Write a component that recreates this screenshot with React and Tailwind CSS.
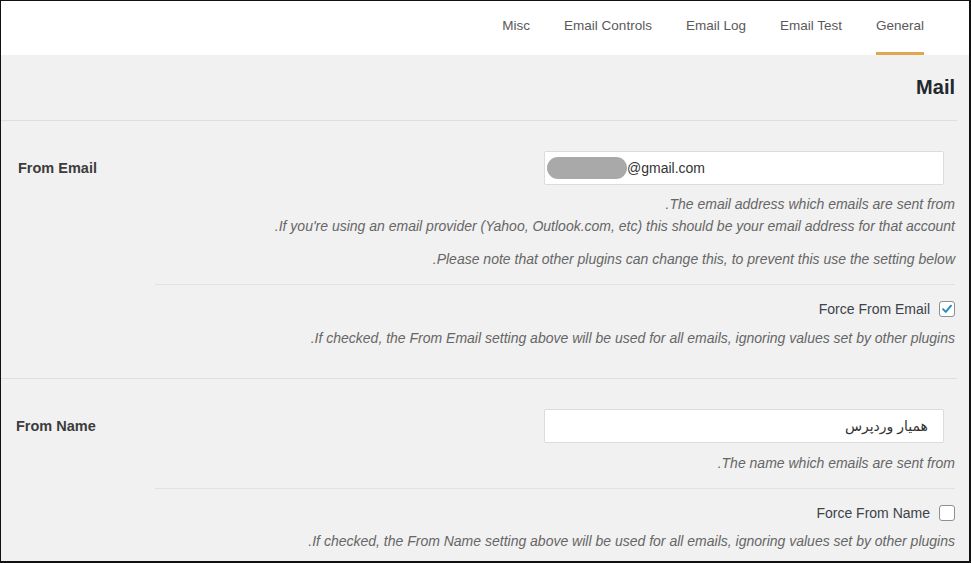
const TABS = ['Misc', 'Email Controls', 'Email Log', 'Email Test', 'General']

const font = { fontFamily: '"Liberation Sans", "DejaVu Sans", sans-serif' }

function Desc({ children, className = '' }) {
  return (
    <div dir="rtl" className={'text-right text-[14px] leading-[22px] italic text-[#666] ' + className}>
      {children}
    </div>
  )
}

function Check({ checked }) {
  return (
    <span className="flex h-4 w-4 items-center justify-center rounded-[3px] border border-[#8c8f94] bg-white">
      {checked && (
        <svg viewBox="0 0 16 16" className="h-[14px] w-[14px]">
          <path d="M3.5 8.2 6.6 11.3 12.6 4.2" fill="none" stroke="#1e8cbe" strokeWidth="2.2" strokeLinecap="round" strokeLinejoin="round" />
        </svg>
      )}
    </span>
  )
}

function Toggle({ label, checked }) {
  return (
    <div className="mt-[13px] flex h-[22px] items-center justify-end gap-[9px] text-[14px] text-[#3c434a]">
      <span>{label}</span>
      <Check checked={checked} />
    </div>
  )
}

export default function App() {
  return (
    <div style={font} className="h-[563px] w-[971px] overflow-hidden border-t border-l border-r-2 border-b-2 border-[#111] bg-[#f1f1f1]">
      {/* Tabs */}
      <div className="flex h-[54px] justify-end gap-[34px] bg-white pr-[45px] text-[13.5px] text-[#5a5a5a]">
        {TABS.map((t) => (
          <div
            key={t}
            className={'h-[54px] pt-[15px] leading-[20px] ' + (t === 'General' ? 'border-b-[3px] border-[#e2a650]' : '')}
          >
            {t}
          </div>
        ))}
      </div>

      <div className="pr-[12px]">
        {/* Heading */}
        <div className="border-b border-[#dedede] pt-[20px] pb-[21px] pr-[2px] text-right text-[20px] leading-[24px] font-bold text-[#23282d]">
          Mail
        </div>

        {/* From Email */}
        <div className="flex border-b border-[#dedede] pt-[30px] pb-[29px]">
          <div className="w-[154px] shrink-0 pl-[17px] text-[14.5px] leading-[34px] font-bold text-[#3c3c3c]">From Email</div>
          <div className="flex flex-1 flex-col pr-[2px]">
            <div className="mr-[11px] flex h-[34px] w-[400px] items-center self-end rounded-[2px] border border-[#dcdcdc] bg-white pl-[2px] text-[14px] text-[#333]">
              <span className="h-[22px] w-[80px] rounded-full bg-[#a9a9a9]" />
              <span>@gmail.com</span>
            </div>
            <Desc className="mt-[8px]">The email address which emails are sent from.</Desc>
            <Desc>If you're using an email provider (Yahoo, Outlook.com, etc) this should be your email address for that account.</Desc>
            <Desc className="mt-[11px]">Please note that other plugins can change this, to prevent this use the setting below.</Desc>
            <div className="mt-[14px] border-t border-[#e2e2e2]" />
            <Toggle label="Force From Email" checked />
            <Desc className="mt-[7px]">If checked, the From Email setting above will be used for all emails, ignoring values set by other plugins.</Desc>
          </div>
        </div>

        {/* From Name */}
        <div className="flex pt-[30px]">
          <div className="w-[154px] shrink-0 pl-[15px] text-[14.5px] leading-[34px] font-bold text-[#3c3c3c]">From Name</div>
          <div className="flex flex-1 flex-col pr-[2px]">
            <div dir="rtl" className="mr-[11px] flex h-[34px] w-[400px] items-center self-end rounded-[2px] border border-[#dcdcdc] bg-white pr-[15px] text-[14px] text-[#333]">
              همیار وردپرس
            </div>
            <Desc className="mt-[9px]">The name which emails are sent from.</Desc>
            <div className="mt-[14px] border-t border-[#e2e2e2]" />
            <Toggle label="Force From Name" />
            <Desc className="mt-[6px]">If checked, the From Name setting above will be used for all emails, ignoring values set by other plugins.</Desc>
          </div>
        </div>
      </div>
    </div>
  )
}
